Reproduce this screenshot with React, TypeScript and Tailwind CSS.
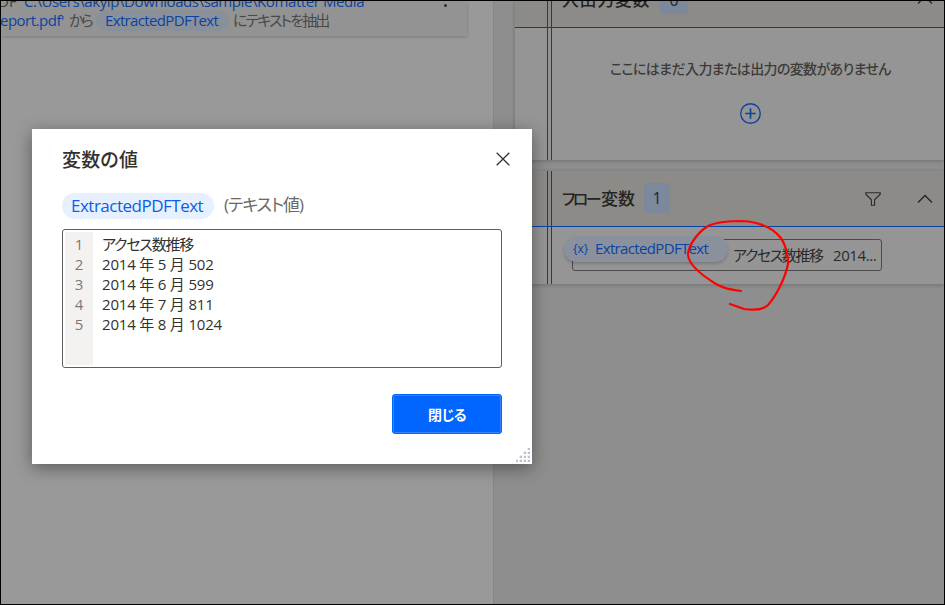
const lines = [
  "アクセス数推移",
  "2014 年 5 月 502",
  "2014 年 6 月 599",
  "2014 年 7 月 811",
  "2014 年 8 月 1024",
];

function ChevronUp() {
  return (
    <svg width="16" height="10" viewBox="0 0 16 10" fill="none" stroke="#242424" strokeWidth="1.3">
      <path d="M1 8.5 8 1.5l7 7" />
    </svg>
  );
}

function FilterIcon() {
  return (
    <svg width="16" height="14" viewBox="0 0 16 14" fill="none" stroke="#2b2b2b" strokeWidth="1.1">
      <path d="M.8.8h14.4v1.4L9.6 7.8v5.4H6.4V7.8L.8 2.2z" />
    </svg>
  );
}

/* Double rule that runs down the left of each variable panel */
function Rails() {
  return <div className="ml-8 w-[5px] shrink-0 border-x border-[#083f96]" />;
}

function ActionPane() {
  return (
    <div className="w-[493px] shrink-0 border-r border-[#868686] bg-[#999999]">
      <div className="h-[35px] w-[466px] overflow-hidden bg-[#939393] shadow-[0_1px_3px_rgba(0,0,0,0.2)]">
        <div className="-mt-[10px] flex h-5 items-center whitespace-nowrap text-[15px] leading-5">
          <span className="-ml-3 w-[32px] text-[#3c3c3a]">PDF</span>
          <span className="tracking-[-0.41px] text-[#0b449f]">
            'C:\Users\akyip\Downloads\sample\Komatter Media
          </span>
          <span className="mt-[9px] ml-auto mr-[20px] size-[3px] rounded-full bg-[#2b2b2b]" />
        </div>
        <div className="-mt-px -ml-px flex h-5 items-center whitespace-nowrap text-[15px] leading-5">
          <span className="w-[69px] tracking-[-0.5px] text-[#0b449f]">eport.pdf'</span>
          <span className="w-[27px] tracking-[-2.5px] text-[#4a4948]">から</span>
          <span className="flex h-[21px] w-[133px] items-center rounded-full bg-[#8a9099] pl-[9px] tracking-[-0.65px] text-[#0b449f]">
            ExtractedPDFText
          </span>
          <span className="ml-1 tracking-[-1.9px] text-[#4a4948]">にテキストを抽出</span>
        </div>
      </div>
    </div>
  );
}

function VariablesPane() {
  return (
    <div className="flex-1 bg-[#8e8e8e] pl-[21px]">
      {/* Input / output variables */}
      <section className="relative flex h-[159px] bg-[#959595] shadow-[0_1px_4px_rgba(0,0,0,0.22)]">
        <div className="absolute inset-x-0 top-0 h-[27px] border-b border-[#083f96] bg-[#8d8b88]" />
        <div className="relative flex w-full">
          <Rails />
          <div className="flex-1">
            <div className="flex h-[27px] overflow-hidden pl-[10px]">
              <h2 className="-mt-[15px] w-[98px] text-[17px] font-medium leading-7 tracking-[0.6px] whitespace-nowrap text-[#242424]">
                入出力変数
              </h2>
              <span className="-mt-[17px] flex h-[30px] w-7 items-center justify-center bg-[#7c899d] pt-px text-[16px] text-[#242424]">
                0
              </span>
              <span className="-mt-[6px] mr-[11px] ml-auto">
                <ChevronUp />
              </span>
            </div>
            <p className="mt-[31px] pl-[58px] text-[14px] font-medium leading-5 tracking-[-0.63px] whitespace-nowrap text-[#3c3b39]">
              ここにはまだ入力または出力の変数がありません
            </p>
            <svg className="mt-[24px] ml-[188px]" width="21" height="21" viewBox="0 0 20 20" fill="none" stroke="#0b449f">
              <circle cx="10" cy="10" r="9.3" strokeWidth="1.3" />
              <path d="M10 5v10M5 10h10" strokeWidth="1.6" />
            </svg>
          </div>
        </div>
      </section>

      {/* Flow variables */}
      <section className="relative mt-[11px] flex h-[113px] bg-[#959595] shadow-[0_1px_4px_rgba(0,0,0,0.22)]">
        <div className="absolute inset-x-0 top-0 h-[56px] border-b border-[#0844a5] bg-[#8d8b88]" />
        <div className="relative flex w-full">
          <Rails />
          <div className="flex-1">
            <div className="flex h-[56px] items-center pl-[10px]">
              <h2 className="w-[82px] text-[17px] font-medium whitespace-nowrap text-[#242424]">
                <span className="text-[16px] tracking-[-2.6px]">フロー</span>
                <span className="ml-[2px]">変数</span>
              </h2>
              <span className="-mt-[3px] flex h-[30px] w-[26px] items-center justify-center bg-[#7c899d] text-[16px] text-[#242424]">
                1
              </span>
              <span className="ml-auto mr-[36px]">
                <FilterIcon />
              </span>
              <span className="mr-[11px]">
                <ChevronUp />
              </span>
            </div>
            <div className="flex pt-[9px] pl-[12px]">
              <div className="z-10 flex h-[26px] w-[164px] shrink-0 items-center rounded-full bg-[#8a919d] pb-px shadow-[0_2px_3px_rgba(0,0,0,0.18)]">
                <span className="ml-[9px] w-[22px] text-[12px] text-[#0b449f]">{"{x}"}</span>
                <span className="text-[15px] tracking-[-0.65px] text-[#0b449f]">ExtractedPDFText</span>
              </div>
              <div className="mt-[3px] -ml-[156px] flex h-8 w-[310px] items-center rounded-[3px] border border-[#4b4b4b] pl-[160px] text-[15px] whitespace-nowrap text-[#2b2b2b]">
                <span className="w-[100px] tracking-[-1.4px]">アクセス数推移</span>
                <span className="tracking-[-0.4px]">2014...</span>
              </div>
            </div>
          </div>
        </div>
      </section>
    </div>
  );
}

function ResizeGrip() {
  return (
    <svg className="absolute right-[2px] bottom-[2px]" width="14" height="14" fill="#b9c0ce">
      {[0, 1, 2, 3].map((row) =>
        Array.from({ length: row + 1 }).map((_, i) => (
          <rect key={`${row}-${i}`} x={11.7 - i * 4} y={row * 4 - 0.3} width="2.3" height="2.3" />
        ))
      )}
    </svg>
  );
}

function ValueDialog() {
  return (
    <div
      role="dialog"
      className="absolute top-[129px] left-8 h-[335px] w-[500px] bg-white px-[30px] shadow-[0_4px_16px_rgba(0,0,0,0.4)]"
    >
      <div className="flex h-[62px] items-center justify-between">
        <h1 className="text-[19px] font-medium tracking-[0.2px] text-[#323130]">変数の値</h1>
        <svg className="-mt-[2px] -mr-[7.5px]" width="14" height="14" viewBox="0 0 14 14" stroke="#323130" strokeWidth="1.3">
          <path d="m.7.7 12.6 12.6M13.3.7.7 13.3" />
        </svg>
      </div>

      <div className="mt-[2px] flex h-[26px] items-center whitespace-nowrap">
        <span className="flex h-[26px] w-[152px] items-center rounded-full bg-[#e6f0ff] pb-px pl-[9px] text-[17px] tracking-[-0.5px] text-[#0b5fe8]">
          ExtractedPDFText
        </span>
        <span className="-mt-[3px] ml-[10px] text-[17px] tracking-[-1.05px] text-[#6b6967]">(テキスト値)</span>
      </div>

      <div className="mt-[10px] flex h-[139px] rounded-[3px] border border-[#605e5c] p-[2px] text-[15px] leading-5 text-[#323130]">
        <div className="w-7 bg-[#f3f2f1] pt-[2px] text-center text-[#7a7876]">
          {lines.map((_, i) => (
            <div key={i} className="h-5">{i + 1}</div>
          ))}
        </div>
        <div className="pt-[2px] pl-[9px] whitespace-pre">
          {lines.map((line, i) => (
            <div key={line} className={i === 0 ? "h-5 tracking-[-1.2px]" : "h-5 tracking-[-0.19px]"}>
              {line}
            </div>
          ))}
        </div>
      </div>

      <button className="mt-[26px] ml-auto flex h-10 w-[110px] items-center justify-center rounded-[3px] border border-[#0066ff] bg-[#0066ff] text-[14px] font-bold tracking-[-0.6px] text-white shadow-[inset_0_0_0_1px_#3385ff]">
        閉じる
      </button>
      <ResizeGrip />
    </div>
  );
}

export default function App() {
  return (
    <div className="relative flex h-[605px] w-[945px] overflow-hidden border border-black font-['Open_Sans','Noto_Sans_CJK_JP',sans-serif] [font-feature-settings:'palt']">
      <ActionPane />
      <VariablesPane />
      <div className="absolute -top-px -left-px">
        <ValueDialog />
      </div>
      {/* Hand-drawn highlight */}
      <svg className="absolute -top-px -left-px z-20" width="945" height="605" fill="none" stroke="#ff0000" strokeWidth="2.2" strokeLinecap="round">
        <path d="M741 291C731 290 723 288 716 284C703 276 689 265 688 255C688 246 697 233 708 226C718 221 733 221 742 221C757 222 772 227 780 237C785 243 788 254 788 264C785 279 776 296 768 305C762 311 751 310 744 309L730 304" />
      </svg>
    </div>
  );
}
